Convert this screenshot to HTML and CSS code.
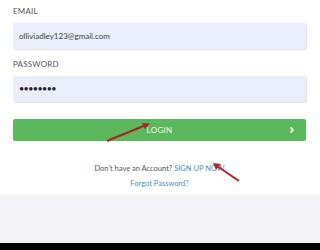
FILE: index.html
```html
<!DOCTYPE html>
<html lang="en">
<head>
  <meta charset="UTF-8">
  <title>Login</title>
  <meta name="viewport" content="width=device-width, initial-scale=1.0" />
  <link rel="stylesheet" href="styles.css">
</head>
<body>

  <div class="page">
    <form class="login-form">
      <div class="form-group">
        <label for="email">EMAIL</label>
        <input type="text" id="email" value="olliviadley123@gmail.com" />
      </div>

      <div class="form-group">
        <label for="password">PASSWORD</label>
        <div class="field dots">&bull;&bull;&bull;&bull;&bull;&bull;&bull;&bull;</div>
      </div>

      <button type="button" class="login-btn">
        <span>LOGIN</span>
        <svg class="chevron" width="8" height="8" viewBox="0 0 8 8">
          <path d="M2.5 1.5 L5 4 L2.5 6.5" fill="none" stroke="white" stroke-width="1.6" />
        </svg>
      </button>

      <p class="signup">Don't have an Account? <a href="#">SIGN UP NOW</a></p>
      <p class="forgot"><a href="#">Forgot Password?</a></p>
    </form>

    <div class="footer"></div>
    <div class="bottom-bar"></div>

    <!-- red annotation arrows -->
    <svg class="arrows" width="320" height="250" viewBox="0 0 320 250">
      <path d="M107 141 L146 125" stroke="#b0232a" stroke-width="2" fill="none" />
      <path d="M142 123 L150 123.5 L145 129 Z" fill="#b0232a" />
      <path d="M239 181 L217 166" stroke="#b0232a" stroke-width="2" fill="none" />
      <path d="M213 163 L221 164 L216 170 Z" fill="#b0232a" />
    </svg>
  </div>

</body>
</html>
```

FILE: styles.css
```css
* {
  box-sizing: border-box;
}

body {
  margin: 0;
  font-family: Lato, "Open Sans", sans-serif;
  background-color: white;
}

.page {
  position: relative;
  width: 320px;
  height: 250px;
  overflow: hidden;
}

.login-form {
  padding: 6px 14px 0 13px;
  height: 194px;
}

.form-group {
  margin-bottom: 10px;
}

label {
  display: block;
  font-size: 8px;
  color: #555;
  letter-spacing: 0.2px;
  margin-bottom: 6px;
  line-height: 11px;
}

input[type="text"],
.field {
  display: block;
  width: 100%;
  height: 26px;
  padding: 0 6px;
  border: none;
  border-radius: 2px;
  background-color: #eaedfc;
  box-shadow: 1px 1px 1px rgba(0, 0, 0, 0.12);
  font-family: Lato, sans-serif;
  font-size: 8px;
  color: #444;
  outline: none;
}

.dots {
  line-height: 26px;
  font-size: 9px;
  letter-spacing: -0.6px;
  color: #222;
}

.login-btn {
  position: relative;
  display: flex;
  justify-content: center;
  align-items: center;
  width: 100%;
  height: 22px;
  margin-top: 17px;
  border: none;
  border-radius: 2px;
  background-color: #5cb85c;
  color: #f2f8f2;
  font-family: Lato, sans-serif;
  font-size: 8px;
  letter-spacing: 0.3px;
}

.chevron {
  position: absolute;
  right: 10px;
  top: 7px;
}

.signup,
.forgot {
  margin: 0;
  text-align: center;
  font-size: 7.5px;
  color: #555;
}

.signup {
  margin-top: 23px;
}

.forgot {
  margin-top: 6px;
}

a {
  color: #4a8fc4;
  text-decoration: none;
}

.footer {
  height: 49px;
  background-color: #f3f3f7;
  border-top: 2px solid #f7f7fa;
}

.bottom-bar {
  height: 7px;
  background-color: #000;
}

.arrows {
  position: absolute;
  top: 0;
  left: 0;
  pointer-events: none;
}
```
